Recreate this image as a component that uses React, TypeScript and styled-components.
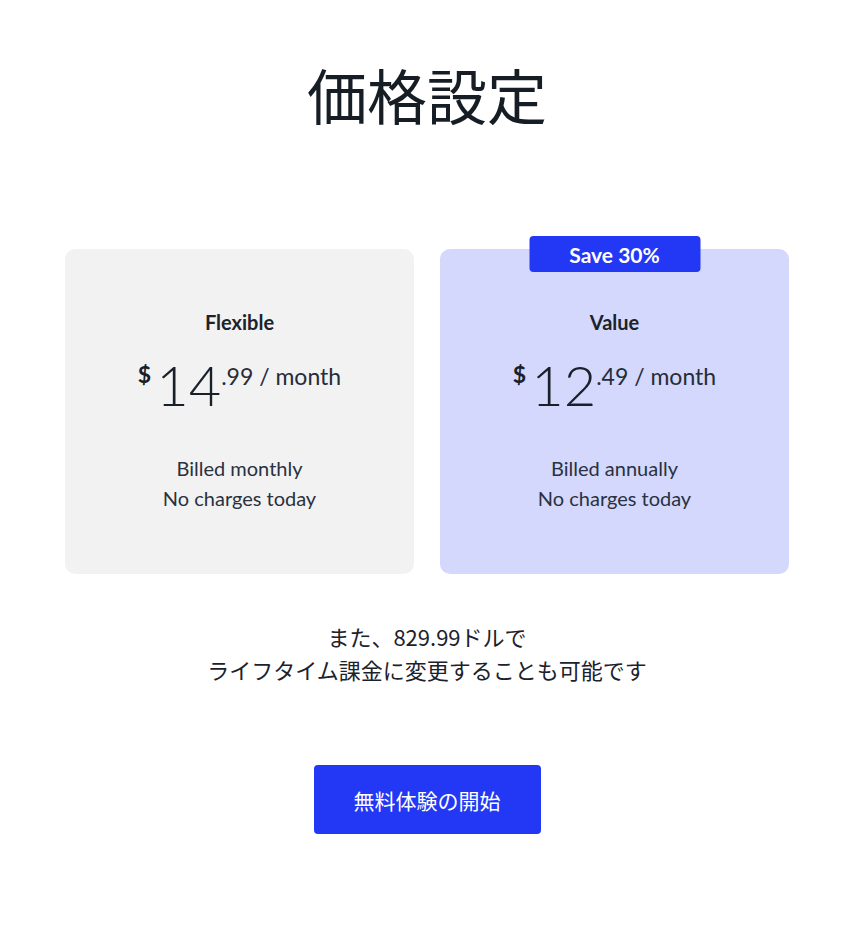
import React from "react";
import styled, { createGlobalStyle } from "styled-components";

const GlobalStyle = createGlobalStyle`
  html, body {
    margin: 0;
    padding: 0;
    background: #ffffff;
  }
  body {
    font-family: Lato, "Noto Sans CJK JP", sans-serif;
    color: #1c2430;
  }
`;

/* Page layout */
const Page = styled.main`
  display: flex;
  flex-direction: column;
  align-items: center;
  padding: 54px 60px 80px 65px;
`;

const Title = styled.h1`
  margin: 0;
  font-family: "Noto Sans CJK JP", sans-serif;
  font-size: 60px;
  line-height: 80px;
  font-weight: 400;
  color: #161d24;
`;

const Plans = styled.section`
  display: grid;
  grid-template-columns: 349px 349px;
  gap: 26px;
  margin-top: 115px;
`;

/* Plan card */
const Card = styled.div<{ $highlight?: boolean }>`
  position: relative;
  display: flex;
  flex-direction: column;
  align-items: center;
  padding: 61px 0 61px;
  border-radius: 10px;
  background: ${({ $highlight }) => ($highlight ? "#d3d8fc" : "#f2f2f2")};
`;

const Badge = styled.div`
  position: absolute;
  top: -13px;
  left: 50%;
  transform: translateX(-50%);
  width: 171px;
  height: 36px;
  display: flex;
  align-items: center;
  justify-content: center;
  border-radius: 4px;
  background: #2338f5;
  color: #ffffff;
  font-size: 21px;
  font-weight: 700;
`;

const PlanName = styled.div`
  font-size: 20px;
  line-height: 24px;
  font-weight: 700;
  color: #1d222b;
`;

const PriceRow = styled.div`
  display: flex;
  align-items: flex-start;
  margin-top: 23px;
  line-height: 1;
  color: #1a2029;
`;

const Currency = styled.span`
  font-size: 23px;
  font-weight: 700;
  margin-top: 6px;
  margin-right: 5px;
`;

const Whole = styled.span`
  font-size: 56px;
  font-weight: 300;
`;

const Fraction = styled.span`
  font-size: 23px;
  font-weight: 400;
  margin-top: 8px;
  color: #262d3a;
`;

const Details = styled.div`
  margin-top: 40px;
  font-size: 20px;
  line-height: 30px;
  text-align: center;
  color: #2a3140;
`;

/* Footer */
const Note = styled.p`
  margin: 46px 0 0;
  font-family: "Noto Sans CJK JP", sans-serif;
  font-size: 22px;
  line-height: 33px;
  text-align: center;
  color: #1c222b;
`;

const TrialButton = styled.button`
  margin-top: 79px;
  width: 227px;
  height: 69px;
  border: none;
  border-radius: 4px;
  background: #2338f5;
  color: #ffffff;
  font-family: "Noto Sans CJK JP", sans-serif;
  font-size: 21px;
  cursor: pointer;
`;

type Plan = {
  name: string;
  whole: string;
  fraction: string;
  billing: string;
  badge?: string;
};

const plans: Plan[] = [
  { name: "Flexible", whole: "14", fraction: ".99 / month", billing: "Billed monthly" },
  { name: "Value", whole: "12", fraction: ".49 / month", billing: "Billed annually", badge: "Save 30%" },
];

export default function App() {
  return (
    <>
      <GlobalStyle />
      <Page>
        <Title>価格設定</Title>
        <Plans>
          {plans.map((p) => (
            <Card key={p.name} $highlight={!!p.badge}>
              {p.badge && <Badge>{p.badge}</Badge>}
              <PlanName>{p.name}</PlanName>
              <PriceRow>
                <Currency>$</Currency>
                <Whole>{p.whole}</Whole>
                <Fraction>{p.fraction}</Fraction>
              </PriceRow>
              <Details>
                {p.billing}
                <br />
                No charges today
              </Details>
            </Card>
          ))}
        </Plans>
        <Note>
          また、829.99ドルで
          <br />
          ライフタイム課金に変更することも可能です
        </Note>
        <TrialButton>無料体験の開始</TrialButton>
      </Page>
    </>
  );
}
